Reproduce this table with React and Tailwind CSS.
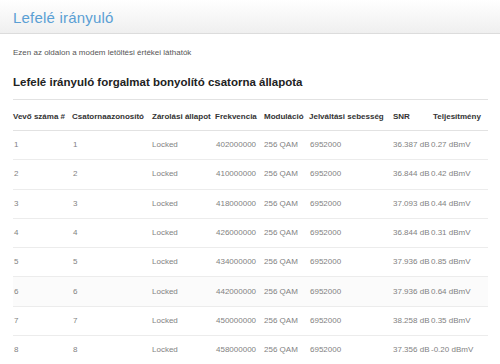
import React from 'react';

const rows = [
  { id: 1, freq: '402000000', snr: '36.387 dB', power: '0.27 dBmV' },
  { id: 2, freq: '410000000', snr: '36.844 dB', power: '0.42 dBmV' },
  { id: 3, freq: '418000000', snr: '37.093 dB', power: '0.44 dBmV' },
  { id: 4, freq: '426000000', snr: '36.844 dB', power: '0.31 dBmV' },
  { id: 5, freq: '434000000', snr: '37.936 dB', power: '0.85 dBmV' },
  { id: 6, freq: '442000000', snr: '37.936 dB', power: '0.64 dBmV' },
  { id: 7, freq: '450000000', snr: '38.258 dB', power: '0.35 dBmV' },
  { id: 8, freq: '458000000', snr: '37.356 dB', power: '-0.20 dBmV' },
];

const App = () => {
  return (
    <div className="w-[500px] h-[364px] overflow-hidden bg-white font-['Liberation_Sans',Arial,sans-serif]">
      {/* page title bar */}
      <div className="h-[34px] border-b border-[#dcdcdc] bg-gradient-to-b from-white to-[#efefef] px-[13px] pt-[2px] flex items-center">
        <h1 className="text-[15px] leading-none text-[#5a9fd4] tracking-[0.2px]">Lefelé irányuló</h1>
      </div>

      <div className="px-[13px]">
        <p className="mt-[14px] text-[8px] leading-[10px] text-[#555]">
          Ezen az oldalon a modem letöltési értékei láthatók
        </p>

        <h2 className="mt-[17px] text-[11.5px] leading-[14px] font-bold text-[#222]">
          Lefelé irányuló forgalmat bonyolító csatorna állapota
        </h2>

        <table className="mt-[10px] w-[475px] table-fixed border-collapse text-[8px] text-left">
          <colgroup>
            <col className="w-[59px]" />
            <col className="w-[80px]" />
            <col className="w-[63px]" />
            <col className="w-[49px]" />
            <col className="w-[45px]" />
            <col className="w-[84px]" />
            <col className="w-[37px]" />
            <col className="w-[58px]" />
          </colgroup>
          <thead>
            <tr className="h-[31px] border-y border-[#e2e2e2] text-[#333]">
              <th className="font-bold p-0 pt-[3px] whitespace-nowrap">Vevő száma #</th>
              <th className="font-bold p-0 pt-[3px] whitespace-nowrap">Csatornaazonosító</th>
              <th className="font-bold p-0 pt-[3px] whitespace-nowrap">Zárolási állapot</th>
              <th className="font-bold p-0 pt-[3px] whitespace-nowrap">Frekvencia</th>
              <th className="font-bold p-0 pt-[3px] whitespace-nowrap">Moduláció</th>
              <th className="font-bold p-0 pt-[3px] whitespace-nowrap">Jelváltási sebesség</th>
              <th className="font-bold p-0 pt-[3px] whitespace-nowrap">SNR</th>
              <th className="font-bold p-0 pt-[3px] pl-[3px] whitespace-nowrap">Teljesítmény</th>
            </tr>
          </thead>
          <tbody className="text-[#828282]">
            {rows.map((r) => (
              <tr key={r.id} className={`h-[29.3px] border-b border-[#ececec] ${r.id === 6 ? 'bg-[#fbfbfb]' : ''}`}>
                <td className="p-0 pl-[1px]">{r.id}</td>
                <td className="p-0 pl-[1px]">{r.id}</td>
                <td className="p-0">Locked</td>
                <td className="p-0 pl-[1px]">{r.freq}</td>
                <td className="p-0">256 QAM</td>
                <td className="p-0 pl-[1px]">6952000</td>
                <td className="p-0 whitespace-nowrap">{r.snr}</td>
                <td className="p-0 pl-[1px] whitespace-nowrap">{r.power}</td>
              </tr>
            ))}
          </tbody>
        </table>
      </div>
    </div>
  );
};

export default App;
